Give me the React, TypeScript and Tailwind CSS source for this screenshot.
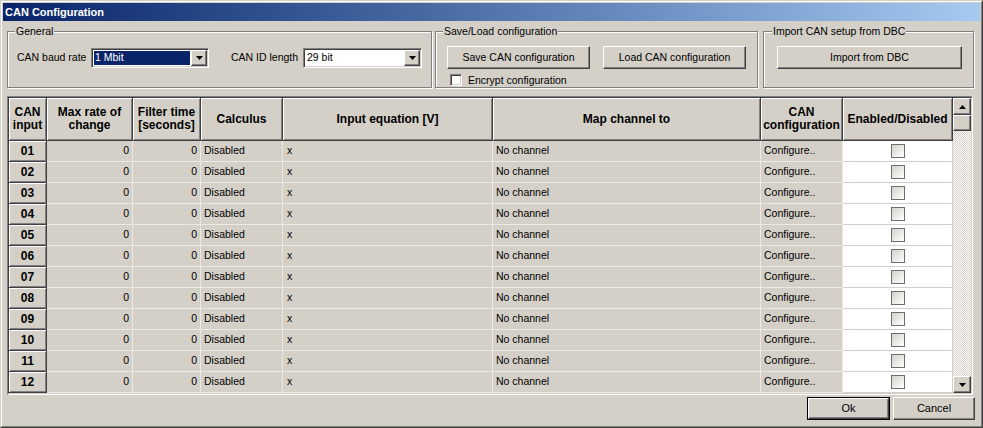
import React from "react";

const raised =
  "border border-t-white border-l-white border-r-[#404040] border-b-[#404040] shadow-[inset_-1px_-1px_0_#808080]";

function Tri({ up }: { up?: boolean }) {
  return (
    <svg width="7" height="4" viewBox="0 0 7 4">
      {up ? <polygon points="3.5,0 7,4 0,4" fill="#000" /> : <polygon points="0,0 7,0 3.5,4" fill="#000" />}
    </svg>
  );
}

function Combo({ value, selected, w }: { value: string; selected?: boolean; w: string }) {
  return (
    <div
      className={`flex h-[20px] ${w} bg-white border border-t-[#808080] border-l-[#808080] border-r-white border-b-white shadow-[inset_1px_1px_0_#404040,inset_-1px_-1px_0_#d4d0c8] p-[1px]`}
    >
      <div className="flex-1 flex py-[1px] pl-[1px] pr-[1px]">
        <div
          className={`flex-1 flex items-center pl-[1px] ${selected ? "bg-[#0a246a] text-white" : "text-black"}`}
        >
          {value}
        </div>
      </div>
      <div className={`w-[16px] h-full bg-[#d4d0c8] flex items-center justify-center ${raised}`}>
        <Tri />
      </div>
    </div>
  );
}

function Btn({ children, w }: { children: React.ReactNode; w: string }) {
  return (
    <div className={`${w} h-[23px] bg-[#d4d0c8] flex items-center justify-center ${raised}`}>{children}</div>
  );
}

const cols = ["w-[38px]", "w-[86px]", "w-[68px]", "w-[82px]", "w-[210px]", "w-[268px]", "w-[82px]", "w-[110px]"];

const headerCell =
  "h-full flex items-center justify-center text-center font-bold text-[12px] leading-[13px] border-r border-b border-r-[#404040] border-b-[#404040] shadow-[inset_1px_1px_0_#fff,inset_-1px_-1px_0_#808080]";

const dataCell = "h-full flex items-center border-r border-b border-r-[#ebe9e4] border-b-[#ebe9e4]";

function Row({ n, empty }: { n: string; empty?: boolean }) {
  return (
    <div className="flex h-[21px] shrink-0">
      <div className={`${cols[0]} ${headerCell} text-[12px]`}>{empty ? "" : n}</div>
      <div className={`${cols[1]} ${dataCell} justify-end pr-[3px]`}>{empty ? "" : "0"}</div>
      <div className={`${cols[2]} ${dataCell} justify-end pr-[3px]`}>{empty ? "" : "0"}</div>
      <div className={`${cols[3]} ${dataCell} pl-[3px]`}>{empty ? "" : "Disabled"}</div>
      <div className={`${cols[4]} ${dataCell} pl-[4px]`}>{empty ? "" : "x"}</div>
      <div className={`${cols[5]} ${dataCell} pl-[3px]`}>{empty ? "" : "No channel"}</div>
      <div className={`${cols[6]} ${dataCell} pl-[3px]`}>{empty ? "" : "Configure.."}</div>
      <div className={`${cols[7]} h-full flex items-center justify-center bg-white border-r border-b border-r-[#d4d0c8] border-b-[#d4d0c8]`}>
        {!empty && (
          <div className="w-[14px] h-[14px] border border-[#6b6f70] bg-gradient-to-br from-[#d2d2cc] to-white" />
        )}
      </div>
    </div>
  );
}

export default function App() {
  const rows = ["01", "02", "03", "04", "05", "06", "07", "08", "09", "10", "11", "12"];
  return (
    <div className="w-[983px] h-[428px] bg-[#d4d0c8] border border-t-[#d4d0c8] border-l-[#d4d0c8] border-r-[#404040] border-b-[#404040] font-['Liberation_Sans',Arial,sans-serif] text-[10.5px] text-black overflow-hidden">
      <div className="w-full h-full border border-t-white border-l-white border-r-[#808080] border-b-[#808080] p-[1px] flex flex-col">
        {/* Title bar */}
        <div className="h-[18px] shrink-0 flex items-center pl-[2px] bg-gradient-to-r from-[#0a246a] to-[#a6caf0] text-white font-bold text-[11px]">
          CAN Configuration
        </div>

        {/* Group boxes */}
        <div className="flex mt-[4px] ml-[4px] h-[63px] shrink-0">
          <fieldset className="w-[425px] h-full border border-[#808080] shadow-[inset_1px_1px_0_#fff,1px_1px_0_#fff]">
            <legend className="ml-[7px] px-[1px] leading-[13px] bg-[#d4d0c8]">General</legend>
            <div className="flex items-center mt-[10px] pl-[9px]">
              <div className="w-[74px]">CAN baud rate</div>
              <Combo value="1 Mbit" selected w="w-[118px]" />
              <div className="w-[72px] ml-[22px]">CAN ID length</div>
              <Combo value="29 bit" w="w-[119px]" />
            </div>
          </fieldset>
          <fieldset className="w-[323px] ml-[3px] h-full border border-[#808080] shadow-[inset_1px_1px_0_#fff,1px_1px_0_#fff]">
            <legend className="ml-[7px] px-[1px] leading-[13px] bg-[#d4d0c8]">Save/Load configuration</legend>
            <div className="flex mt-[8px] pl-[11px] gap-[13px]">
              <Btn w="w-[143px]">Save CAN configuration</Btn>
              <Btn w="w-[143px]">Load CAN configuration</Btn>
            </div>
            <div className="flex items-center mt-[5px] pl-[14px]">
              <div className="w-[12px] h-[12px] bg-white border border-t-[#808080] border-l-[#808080] border-r-white border-b-white shadow-[inset_1px_1px_0_#404040,inset_-1px_-1px_0_#d4d0c8]" />
              <div className="ml-[6px] leading-[12px]">Encrypt configuration</div>
            </div>
          </fieldset>
          <fieldset className="w-[211px] ml-[5px] h-full border border-[#808080] shadow-[inset_1px_1px_0_#fff,1px_1px_0_#fff]">
            <legend className="ml-[8px] px-[1px] leading-[13px] bg-[#d4d0c8]">Import CAN setup from DBC</legend>
            <div className="flex mt-[8px] pl-[13px]">
              <Btn w="w-[185px]">Import from DBC</Btn>
            </div>
          </fieldset>
        </div>

        {/* Table */}
        <div className="mt-[8px] ml-[4px] w-[966px] shrink-0 border border-t-[#808080] border-l-[#808080] border-r-white border-b-white">
          <div className="border border-t-[#404040] border-l-[#404040] border-r-[#d4d0c8] border-b-[#d4d0c8] flex h-[297px]">
            <div className="w-[944px] flex flex-col">
              <div className="flex h-[43px] shrink-0">
                <div className={`${cols[0]} ${headerCell}`}>CAN<br />input</div>
                <div className={`${cols[1]} ${headerCell}`}>Max rate of<br />change</div>
                <div className={`${cols[2]} ${headerCell}`}>Filter time<br />[seconds]</div>
                <div className={`${cols[3]} ${headerCell}`}>Calculus</div>
                <div className={`${cols[4]} ${headerCell}`}>Input equation [V]</div>
                <div className={`${cols[5]} ${headerCell}`}>Map channel to</div>
                <div className={`${cols[6]} ${headerCell}`}>CAN<br />configuration</div>
                <div className={`${cols[7]} ${headerCell}`}>Enabled/Disabled</div>
              </div>
              <div className="flex-1 flex flex-col overflow-hidden">
                {rows.map((r) => (
                  <Row key={r} n={r} />
                ))}
                <Row n="13" empty />
              </div>
            </div>
            <div className="w-[18px] flex flex-col">
              <div className={`h-[17px] shrink-0 bg-[#d4d0c8] flex items-center justify-center ${raised}`}>
                <Tri up />
              </div>
              <div className={`h-[16px] shrink-0 bg-[#d4d0c8] ${raised}`} />
              <div className="flex-1 bg-[repeating-conic-gradient(#ffffff_0%_25%,#d4d0c8_0%_50%)] bg-[length:2px_2px]" />
              <div className={`h-[17px] shrink-0 bg-[#d4d0c8] flex items-center justify-center ${raised}`}>
                <Tri />
              </div>
            </div>
          </div>
        </div>

        {/* Bottom buttons */}
        <div className="flex justify-end mt-[2px] pr-[5px] gap-[3px]">
          <div className="border border-black">
            <div className={`w-[81px] h-[21px] bg-[#d4d0c8] flex items-center justify-center ${raised} text-[11px]`}>Ok</div>
          </div>
          <div className={`w-[82px] h-[23px] bg-[#d4d0c8] flex items-center justify-center ${raised} text-[11px]`}>Cancel</div>
        </div>
      </div>
    </div>
  );
}
